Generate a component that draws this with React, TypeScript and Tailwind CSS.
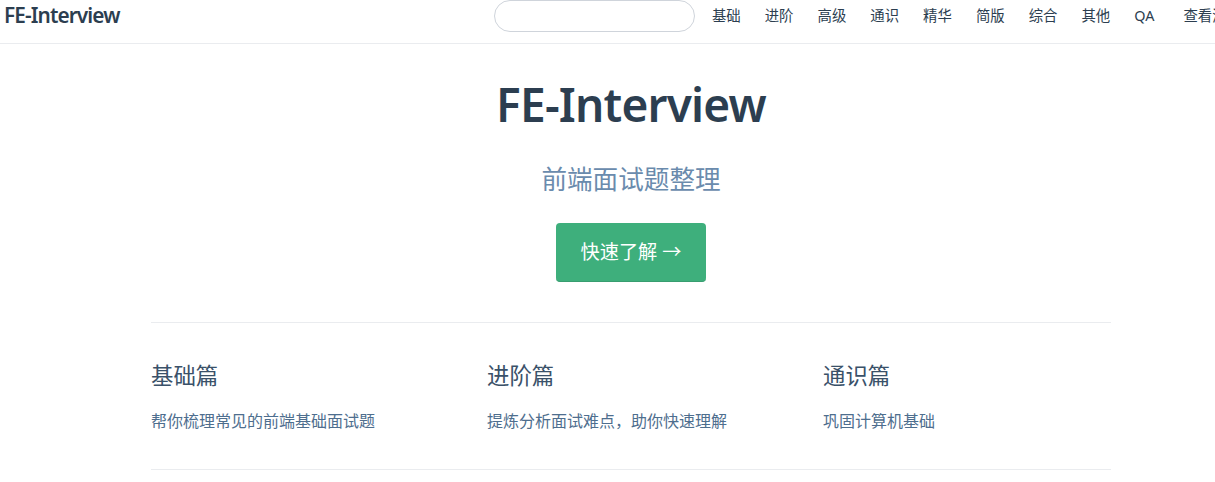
import { ArrowUpRight } from 'lucide-react';

const navLinks = ['基础', '进阶', '高级', '通识', '精华', '简版', '综合', '其他'];

const features = [
  { title: '基础篇', details: '帮你梳理常见的前端基础面试题' },
  { title: '进阶篇', details: '提炼分析面试难点，助你快速理解' },
  { title: '通识篇', details: '巩固计算机基础' },
];

function Navbar() {
  return (
    <header className="flex h-[44px] items-start border-b border-[#eaecef] bg-white pl-[4px] pr-[6px]">
      <a className="text-[20.8px] font-semibold leading-[31px] tracking-[-0.9px] text-[#2c3e50]">FE-Interview</a>
      <div className="ml-auto flex items-start">
        <input
          aria-label="Search"
          className="h-[32px] w-[201px] rounded-[2rem] border border-[#cfd4db] bg-white px-3 text-sm outline-none"
        />
        <nav className="ml-[17px] flex text-[14.4px] leading-[31px] text-[#2c3e50]">
          {navLinks.map((link) => (
            <a key={link} className="mr-[24px]">
              {link}
            </a>
          ))}
          <a className="mr-[29px]">QA</a>
          <a className="flex items-center">
            查看源码
            <ArrowUpRight className="ml-[2px] h-[13px] w-[13px] text-[#aaa]" />
          </a>
        </nav>
      </div>
    </header>
  );
}

export default function App() {
  return (
    <div
      className="w-[1262px] bg-white text-[#2c3e50]"
      style={{ fontFamily: '"Noto Sans", "Noto Sans CJK SC", sans-serif' }}
    >
      <Navbar />
      <main className="mx-auto max-w-[960px]">
        <div className="flex flex-col items-center pt-[30px] text-center">
          <h1 className="text-[46px] font-semibold leading-[60px] tracking-[-0.8px]">FE-Interview</h1>
          <p className="mt-[29px] text-[25.6px] leading-[33px] text-[#6a8bad]">前端面试题整理</p>
          <a className="mt-[27px] rounded-[4px] border-b border-[#389d70] bg-[#3eaf7c] px-[25px] py-[12.8px] text-[19.2px] leading-[32.6px] text-white">
            快速了解 →
          </a>
        </div>
        <div className="mt-[40px] flex justify-between border-t border-[#eaecef] pb-[34px] pt-[39px]">
          {features.map((f) => (
            <div key={f.title} className="w-[30%]">
              <h2 className="text-[22.4px] font-normal leading-[28px] text-[#3a5169]">{f.title}</h2>
              <p className="mt-[18px] text-base leading-[27px] text-[#4e6e8e]">{f.details}</p>
            </div>
          ))}
        </div>
        <div className="border-t border-[#eaecef]" />
      </main>
    </div>
  );
}
